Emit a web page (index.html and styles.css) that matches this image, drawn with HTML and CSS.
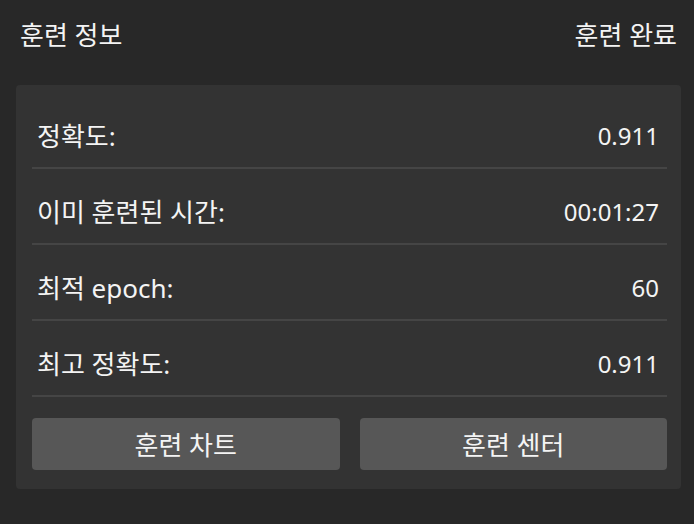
FILE: index.html
```html
<!DOCTYPE html>
<html lang="ko">
<head>
<meta charset="utf-8">
<link rel="stylesheet" href="styles.css">
</head>
<body>
<div class="app">
  <header class="header">
    <span class="title">훈련 정보</span>
    <span class="status">훈련 완료</span>
  </header>
  <section class="panel">
    <div class="row"><span class="label">정확도:</span><span class="value">0.911</span></div>
    <div class="row"><span class="label">이미 훈련된 시간:</span><span class="value">00:01:27</span></div>
    <div class="row"><span class="label">최적 epoch:</span><span class="value">60</span></div>
    <div class="row"><span class="label">최고 정확도:</span><span class="value">0.911</span></div>
    <div class="actions">
      <button class="btn">훈련 차트</button>
      <button class="btn">훈련 센터</button>
    </div>
  </section>
</div>
</body>
</html>
```

FILE: styles.css
```css
html, body {
  margin: 0;
  padding: 0;
  background: #282828;
}
body {
  width: 694px;
  height: 524px;
  overflow: hidden;
  font-family: "Noto Sans", "Noto Sans CJK KR", sans-serif;
  color: #f4f4f4;
}
.app {
  padding: 0 13px 0 16px;
}
.header {
  display: flex;
  justify-content: space-between;
  align-items: center;
  height: 85px;
  padding: 0 4px 18px 4px;
  font-size: 26px;
  box-sizing: border-box;
}
.panel {
  background: #333333;
  border-radius: 4px;
  padding: 8px 14px 19px 16px;
}
.row {
  display: flex;
  justify-content: space-between;
  align-items: center;
  height: 76px;
  box-sizing: border-box;
  border-bottom: 2px solid #454545;
  padding: 10px 8px 0 5px;
  font-size: 26px;
}
.value {
  font-size: 24px;
}
.actions {
  display: flex;
  gap: 20px;
  margin-top: 21px;
}
.btn {
  flex: 1;
  height: 52px;
  background: #575757;
  border: none;
  border-radius: 4px;
  color: #f4f4f4;
  font-family: inherit;
  font-size: 26px;
  padding: 0;
}
```
